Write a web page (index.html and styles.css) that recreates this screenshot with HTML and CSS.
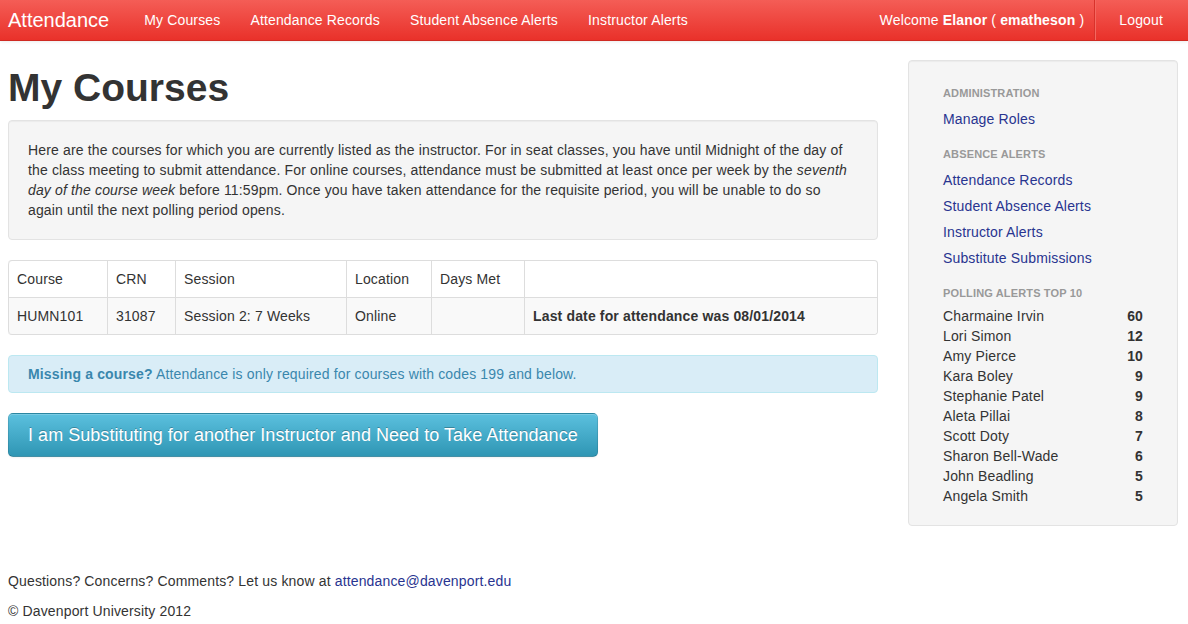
FILE: index.html
```html
<!DOCTYPE html>
<html>
<head>
<meta charset="utf-8">
<title>Attendance</title>
<link rel="stylesheet" href="styles.css">
</head>
<body>
<header class="navbar">
  <a class="brand" href="#">Attendance</a>
  <nav class="nav">
    <a href="#">My Courses</a>
    <a href="#">Attendance Records</a>
    <a href="#">Student Absence Alerts</a>
    <a href="#">Instructor Alerts</a>
  </nav>
  <div class="nav-right">
    <span class="welcome">Welcome <b>Elanor</b> ( <b>ematheson</b> )</span>
    <a class="logout" href="#">Logout</a>
  </div>
</header>

<div class="page">
  <main class="main">
    <h1>My Courses</h1>
    <div class="well">
      Here are the courses for which you are currently listed as the instructor. For in seat classes, you have until Midnight of the day of the class meeting to submit attendance. For online courses, attendance must be submitted at least once per week by the <em>seventh day of the course week</em> before 11:59pm. Once you have taken attendance for the requisite period, you will be unable to do so again until the next polling period opens.
    </div>

    <table class="courses">
      <thead>
        <tr>
          <th class="c-course">Course</th>
          <th class="c-crn">CRN</th>
          <th class="c-session">Session</th>
          <th class="c-loc">Location</th>
          <th class="c-days">Days Met</th>
          <th></th>
        </tr>
      </thead>
      <tbody>
        <tr>
          <td>HUMN101</td>
          <td>31087</td>
          <td>Session 2: 7 Weeks</td>
          <td>Online</td>
          <td></td>
          <td><b>Last date for attendance was 08/01/2014</b></td>
        </tr>
      </tbody>
    </table>

    <div class="alert"><b>Missing a course?</b> Attendance is only required for courses with codes 199 and below.</div>

    <a class="btn-sub" href="#">I am Substituting for another Instructor and Need to Take Attendance</a>
  </main>

  <aside class="sidebar">
    <div class="side-header first">ADMINISTRATION</div>
    <a class="side-link" href="#">Manage Roles</a>
    <div class="side-header">ABSENCE ALERTS</div>
    <a class="side-link" href="#">Attendance Records</a>
    <a class="side-link" href="#">Student Absence Alerts</a>
    <a class="side-link" href="#">Instructor Alerts</a>
    <a class="side-link" href="#">Substitute Submissions</a>
    <div class="side-header">POLLING ALERTS TOP 10</div>
    <ul class="top-list">
      <li><span>Charmaine Irvin</span><b>60</b></li>
      <li><span>Lori Simon</span><b>12</b></li>
      <li><span>Amy Pierce</span><b>10</b></li>
      <li><span>Kara Boley</span><b>9</b></li>
      <li><span>Stephanie Patel</span><b>9</b></li>
      <li><span>Aleta Pillai</span><b>8</b></li>
      <li><span>Scott Doty</span><b>7</b></li>
      <li><span>Sharon Bell-Wade</span><b>6</b></li>
      <li><span>John Beadling</span><b>5</b></li>
      <li><span>Angela Smith</span><b>5</b></li>
    </ul>
  </aside>
</div>

<footer class="footer">
  <p>Questions? Concerns? Comments? Let us know at <a href="#">attendance@davenport.edu</a></p>
  <p>&copy; Davenport University 2012</p>
</footer>
</body>
</html>
```

FILE: styles.css
```css
* { box-sizing: border-box; }

html, body {
  margin: 0;
  padding: 0;
  background: #fff;
}

body {
  font-family: "Liberation Sans", Arial, Helvetica, sans-serif;
  font-size: 14px;
  line-height: 20px;
  letter-spacing: 0.15px;
  color: #333;
}

a { text-decoration: none; }

/* Navbar */
.navbar {
  display: flex;
  align-items: stretch;
  height: 41px;
  background: linear-gradient(to bottom, #f45d56 0%, #e9312a 100%);
  border-bottom: 1px solid #cf2a22;
  box-shadow: 0 1px 3px rgba(0,0,0,0.08);
  color: #fff;
}

.brand {
  color: #fff;
  font-size: 20px;
  letter-spacing: 0;
  line-height: 40px;
  padding: 0 20px 0 8px;
}

.nav {
  display: flex;
}

.nav a {
  color: #fff;
  line-height: 40px;
  padding: 0 15px;
}

.nav-right {
  margin-left: auto;
  display: flex;
  align-items: stretch;
}

.welcome {
  line-height: 40px;
  padding-right: 10px;
}

.logout {
  color: #fff;
  line-height: 40px;
  padding: 0 25px 0 24px;
  border-left: 1px solid #d8322b;
  box-shadow: inset 1px 0 0 #f46860;
}

/* Page layout */
.page {
  display: flex;
  align-items: flex-start;
  gap: 30px;
  padding: 0 10px 0 8px;
}

.main {
  width: 870px;
  flex: none;
}

h1 {
  font-size: 39px;
  line-height: 40px;
  letter-spacing: 0;
  font-weight: bold;
  margin: 27px 0 12px;
  color: #333;
}

.well {
  background: #f5f5f5;
  border: 1px solid #e3e3e3;
  border-radius: 4px;
  padding: 19px;
  box-shadow: inset 0 1px 1px rgba(0,0,0,0.04);
  margin-bottom: 20px;
}

/* Table */
.courses {
  width: 100%;
  border-collapse: separate;
  border-spacing: 0;
  border: 1px solid #ddd;
  border-left: 0;
  border-radius: 4px;
  margin-bottom: 20px;
}

.courses th,
.courses td {
  padding: 8px;
  line-height: 20px;
  text-align: left;
  vertical-align: top;
  border-left: 1px solid #ddd;
}

.courses th {
  font-weight: normal;
}

.courses td {
  border-top: 1px solid #ddd;
  background: #f9f9f9;
}

.courses tr:first-child th:first-child { border-top-left-radius: 4px; }
.courses tr:first-child th:last-child { border-top-right-radius: 4px; }
.courses tbody tr:last-child td:first-child { border-bottom-left-radius: 4px; }
.courses tbody tr:last-child td:last-child { border-bottom-right-radius: 4px; }

.c-course { width: 99px; }
.c-crn { width: 68px; }
.c-session { width: 171px; }
.c-loc { width: 85px; }
.c-days { width: 93px; }

/* Alert */
.alert {
  background: #d9edf7;
  border: 1px solid #bce8f1;
  border-radius: 4px;
  color: #3a87ad;
  padding: 8px 19px;
  margin-bottom: 20px;
}

/* Button */
.btn-sub {
  display: inline-block;
  color: #fff;
  font-size: 18px;
  letter-spacing: 0.04px;
  line-height: 20px;
  padding: 11px 19px;
  border-radius: 5px;
  background: linear-gradient(to bottom, #5bc0de 0%, #2f96b4 100%);
  border: 1px solid #2a85a0;
  border-color: rgba(0,0,0,0.1) rgba(0,0,0,0.1) rgba(0,0,0,0.25);
  text-shadow: 0 -1px 0 rgba(0,0,0,0.25);
  box-shadow: inset 0 1px 0 rgba(255,255,255,0.2), 0 1px 2px rgba(0,0,0,0.05);
}

/* Sidebar */
.sidebar {
  width: 270px;
  flex: none;
  margin-top: 19px;
  background: #f5f5f5;
  border: 1px solid #e3e3e3;
  border-radius: 4px;
  box-shadow: inset 0 1px 1px rgba(0,0,0,0.04);
  padding: 22px 34px 19px;
}

.side-header {
  font-size: 11px;
  font-weight: bold;
  line-height: 20px;
  color: #999;
  text-transform: uppercase;
  margin: 12px 0 3px;
}

.side-header.first { margin-top: 0; }

.side-link {
  display: block;
  color: #283490;
  padding: 3px 0;
  line-height: 20px;
}

.top-list {
  list-style: none;
  margin: 0;
  padding: 0;
}

.top-list li {
  display: flex;
  justify-content: space-between;
  line-height: 20px;
}

/* Footer */
.footer {
  padding: 0 8px;
  margin-top: 45px;
}

.footer p {
  margin: 0 0 10px;
}

.footer a {
  color: #283490;
}
```
